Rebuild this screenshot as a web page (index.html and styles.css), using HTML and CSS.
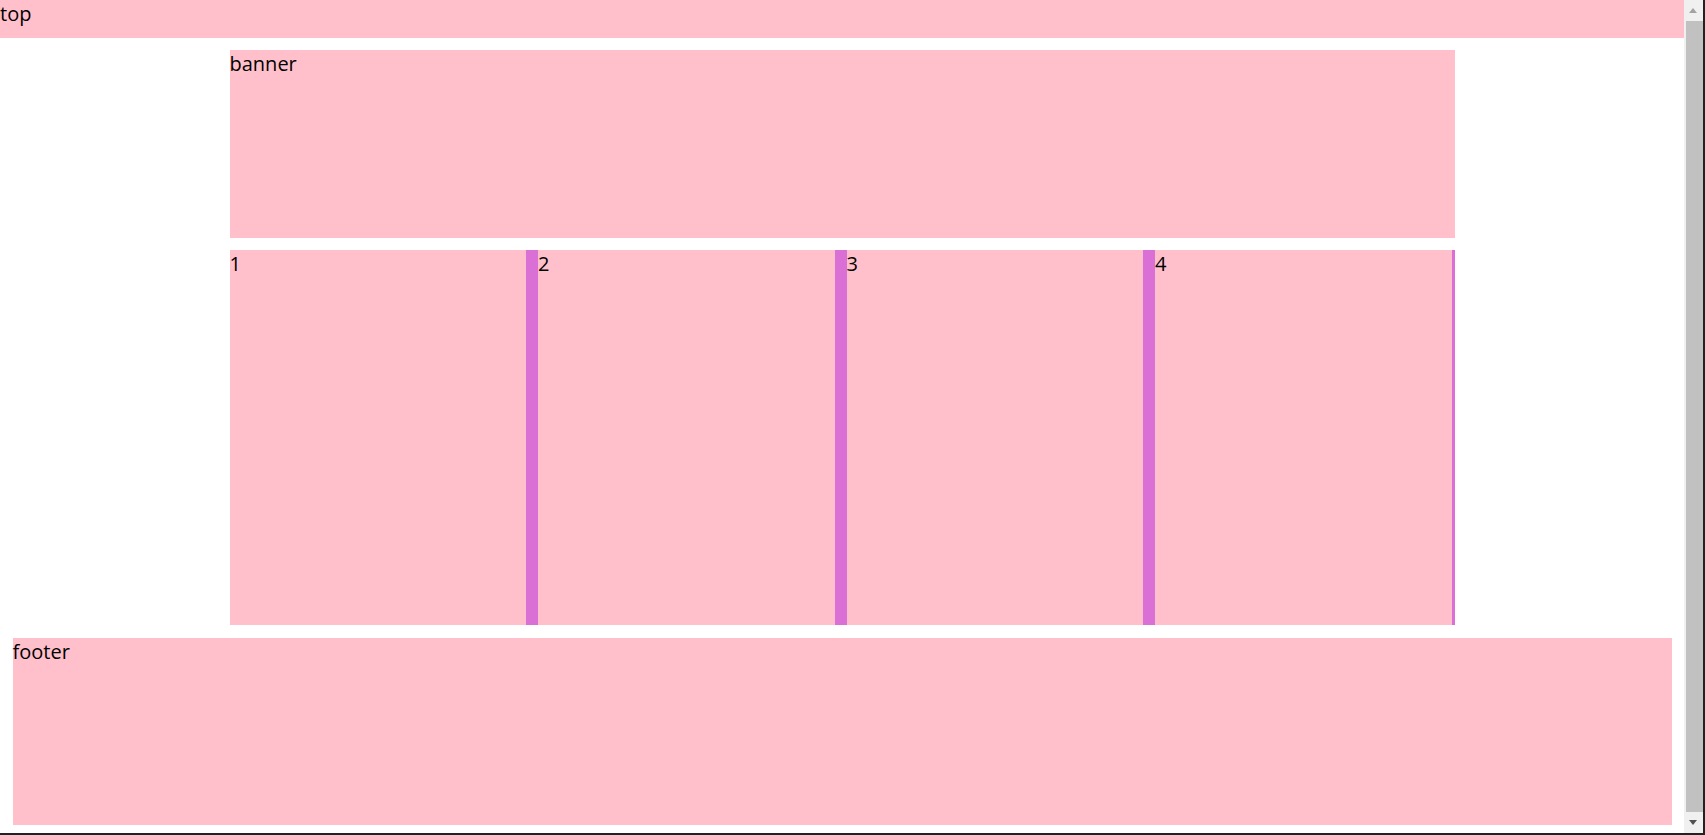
FILE: index.html
```html
<!DOCTYPE html>
<html lang="en">
<head>
    <meta charset="UTF-8">
    <meta name="viewport" content="width=device-width, initial-scale=1.0">
    <title>Layout</title>
    <link rel="stylesheet" href="styles.css">
</head>
<body>
    <div class="page">
        <div class="top">top</div>
        <div class="banner">banner</div>
        <div class="main">
            <div class="col">1</div>
            <div class="col">2</div>
            <div class="col">3</div>
            <div class="col">4</div>
        </div>
        <div class="footer">footer</div>
    </div>

    <!-- fake window scrollbar + frame -->
    <div class="scrollbar">
        <div class="arrow up"></div>
        <div class="thumb"></div>
        <div class="arrow down"></div>
    </div>
    <div class="frame-bottom"></div>
</body>
</html>
```

FILE: styles.css
```css
html, body {
    margin: 0;
    padding: 0;
    overflow: hidden;
    height: 100%;
}

body {
    font-family: "Open Sans", "Noto Sans CJK SC", sans-serif;
    font-size: 20px;
    line-height: 27px;
    color: #000;
    background: #fff;
}

.page {
    width: 1684px;
}

.top {
    height: 37.5px;
    background-color: pink;
}

.banner {
    width: 1225px;
    height: 187.5px;
    margin: 12.5px auto;
    background-color: pink;
}

.main {
    width: 1225px;
    height: 375px;
    margin: 0 auto;
    display: flex;
    overflow: hidden;
}

.col {
    flex: 0 0 296.5px;
    height: 375px;
    background-color: pink;
    border-right: 12.5px solid orchid;
}

.footer {
    height: 187.5px;
    margin: 12.5px;
    background-color: pink;
}

/* window chrome */
.scrollbar {
    position: fixed;
    top: 0;
    right: 2px;
    width: 19px;
    height: 833px;
    background: #f0f0f0;
    display: flex;
    flex-direction: column;
    align-items: flex-end;
}

.scrollbar::after {
    content: "";
    position: absolute;
    top: 0;
    right: -2px;
    width: 2px;
    height: 835px;
    background: #222;
}

.thumb {
    width: 17px;
    flex: 1;
    background: #c1c1c1;
}

.arrow {
    height: 21px;
    width: 19px;
    position: relative;
}

.arrow.up::before,
.arrow.down::before {
    content: "";
    position: absolute;
    left: 5px;
    border-left: 4.5px solid transparent;
    border-right: 4.5px solid transparent;
}

.arrow.up::before {
    top: 8px;
    border-bottom: 5px solid #a3a3a3;
}

.arrow.down::before {
    top: 8px;
    border-top: 5px solid #505050;
}

.frame-bottom {
    position: fixed;
    left: 0;
    bottom: 0;
    width: 100%;
    height: 2px;
    background: #222;
}
```
